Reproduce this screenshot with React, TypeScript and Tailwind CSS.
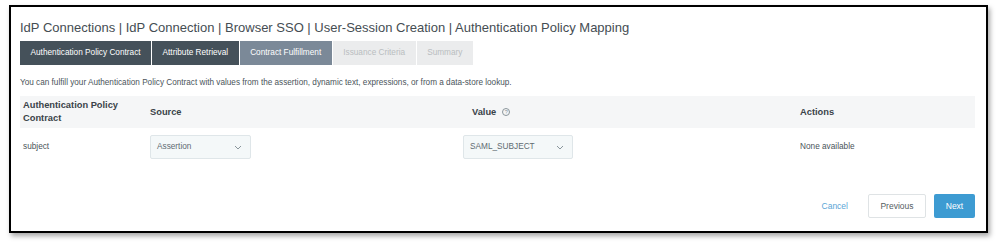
import React from 'react';

const tabs = [
  { label: 'Authentication Policy Contract', state: 'done' },
  { label: 'Attribute Retrieval', state: 'done' },
  { label: 'Contract Fulfillment', state: 'active' },
  { label: 'Issuance Criteria', state: 'disabled' },
  { label: 'Summary', state: 'disabled' },
];

const tabClass: Record<string, string> = {
  done: 'bg-[#45515a] text-white',
  active: 'bg-[#7b8998] text-white',
  disabled: 'bg-[#ebeced] text-[#b9bdc0]',
};

const Chevron = () => (
  <svg width="8" height="5" viewBox="0 0 8 5" fill="none" className="text-[#8a969c]">
    <path d="M1 1l3 3 3-3" stroke="currentColor" strokeWidth="1" />
  </svg>
);

const Select = ({ value, width }: { value: string; width: string }) => (
  <div className={`flex h-[24px] items-center justify-between rounded-[2px] border border-[#dfe6e9] bg-[#f4f8f9] pl-[6px] pr-[8px] ${width}`}>
    <span className="text-[8.25px] text-[#5f6b72]">{value}</span>
    <Chevron />
  </div>
);

const App: React.FC = () => {
  return (
    <div className="h-[245px] w-[997px] bg-white pl-[9px] pt-[5px] font-['Liberation_Sans',Arial,sans-serif]">
      <div className="h-[228px] w-[979px] border-2 border-black bg-white pl-[9px] pr-[11px] shadow-[2px_3px_5px_rgba(0,0,0,0.35)]">
        <h1 className="mt-[12px] text-[13px] leading-[17px] text-[#454d53]">
          IdP Connections | IdP Connection | Browser SSO | User-Session Creation | Authentication Policy Mapping
        </h1>

        <div className="mt-[5px] flex gap-[1px]">
          {tabs.map(t => (
            <div key={t.label} className={`flex h-[24px] items-center px-[10.5px] text-[8.25px] ${tabClass[t.state]}`}>
              {t.label}
            </div>
          ))}
        </div>

        <p className="mt-[13px] text-[8.2px] leading-[10px] text-[#4a545a]">
          You can fulfill your Authentication Policy Contract with values from the assertion, dynamic text, expressions, or from a data-store lookup.
        </p>

        <div className="mt-[8px] grid h-[32px] grid-cols-[130px_313px_337px_1fr] items-center bg-[#f5f6f7] text-[9.3px] font-bold leading-[13px] text-[#3a4349]">
          <div className="pl-[3px]">Authentication Policy<br />Contract</div>
          <div>Source</div>
          <div className="flex items-center gap-[6px] pl-[9px]">
            Value
            <span className="flex h-[8px] w-[8px] items-center justify-center rounded-full border border-[#8a959b] text-[5.5px] font-normal text-[#8a959b]">?</span>
          </div>
          <div>Actions</div>
        </div>

        <div className="mt-[7px] grid grid-cols-[130px_313px_337px_1fr] items-center text-[8.25px] text-[#4a545a]">
          <div className="pl-[3px]">subject</div>
          <div><Select value="Assertion" width="w-[101px]" /></div>
          <div><Select value="SAML_SUBJECT" width="w-[110px]" /></div>
          <div>None available</div>
        </div>

        <div className="mt-[35px] flex items-center justify-end gap-[8px]">
          <span className="mr-[12px] text-[8.5px] text-[#5ba6d6]">Cancel</span>
          <button className="h-[24px] w-[58px] rounded-[2px] border border-[#dfe3e5] bg-white text-[8.5px] text-[#555d62]">Previous</button>
          <button className="h-[24px] w-[41px] rounded-[2px] bg-[#3d9bd2] text-[8.5px] text-white">Next</button>
        </div>
      </div>
    </div>
  );
};

export default App;
